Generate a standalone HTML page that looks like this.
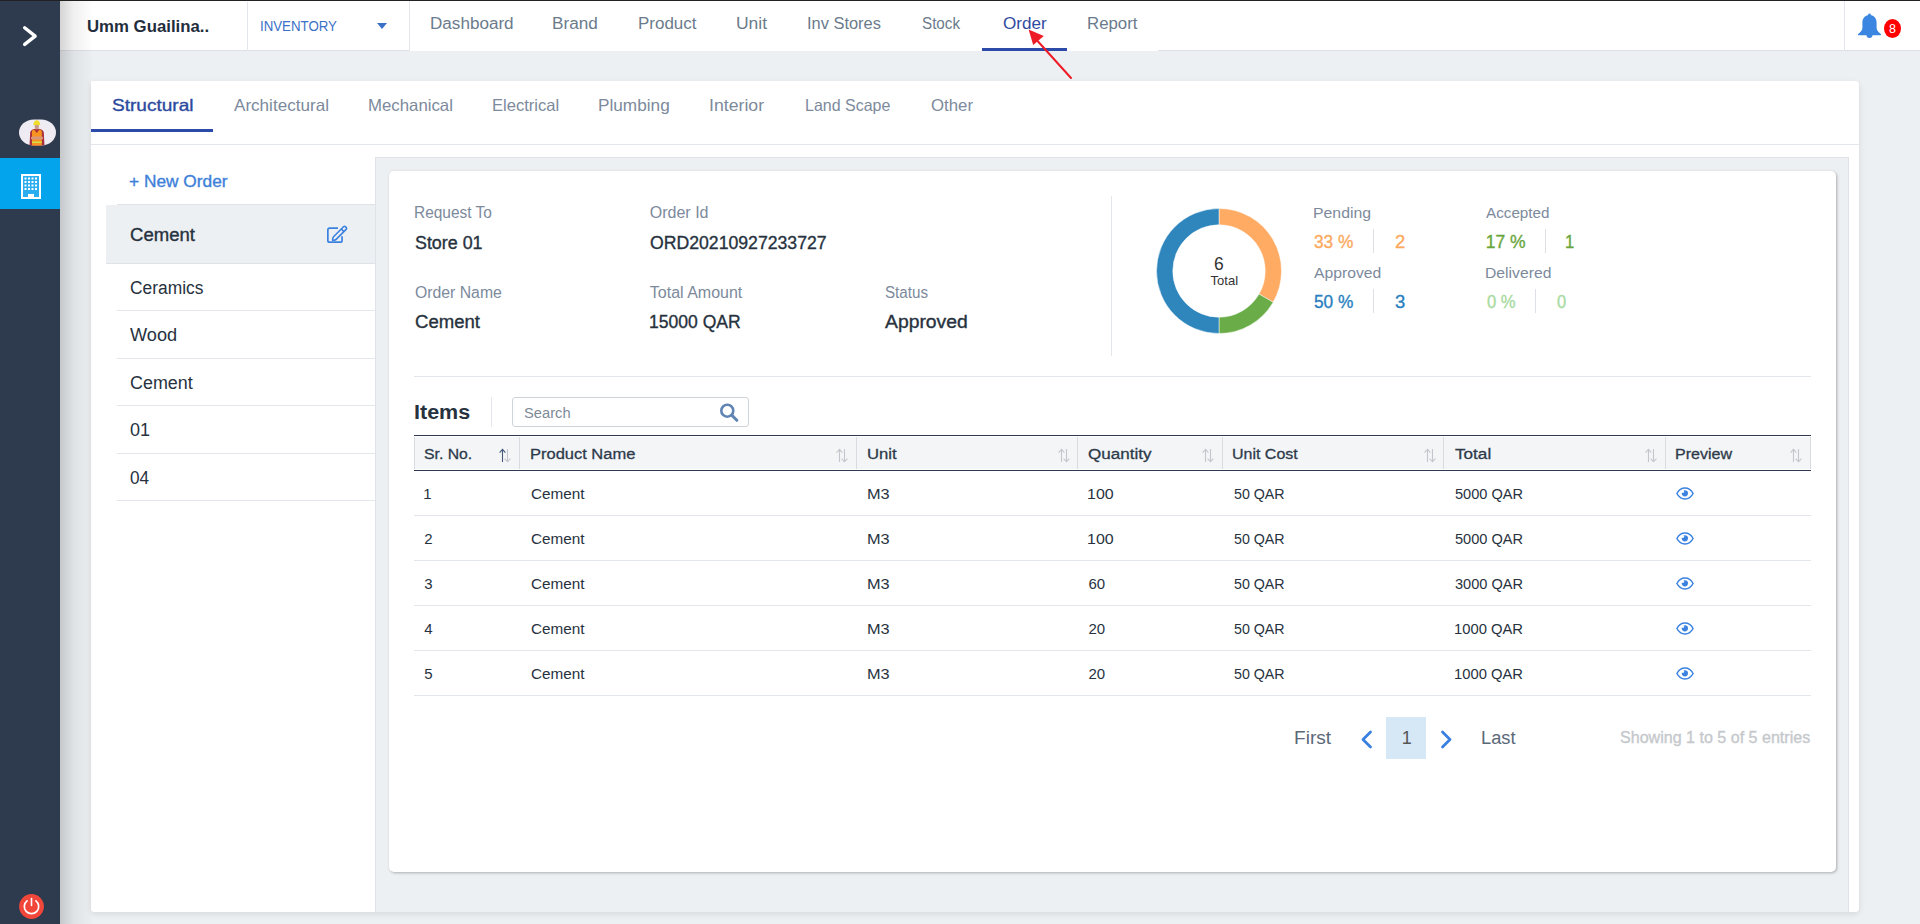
<!DOCTYPE html>
<html><head><meta charset="utf-8">
<style>
*{box-sizing:border-box;margin:0;padding:0}
html,body{width:1920px;height:924px;overflow:hidden;background:#edf0f3;font-family:"Liberation Sans",sans-serif;color:#27323e}
.abs{position:absolute}
.t{position:absolute;white-space:nowrap;line-height:1;transform-origin:0 0}
.bm{display:inline-block;width:0;height:0;vertical-align:baseline}
.hl{position:absolute;height:1px;background:#e3e6ea}
.vl{position:absolute;width:1px;background:#dfe3e7}
</style></head>
<body>
<div class="abs" style="left:0;top:0;width:1920px;height:1px;background:#222"></div>
<div class="abs" style="left:0;top:1px;width:60px;height:923px;background:#2e3b4e">
  <svg class="abs" style="left:22px;top:24px" width="16" height="24" viewBox="0 0 16 24"><path d="M2.65 2.75 L13.15 11.1 L2.65 19.45" fill="none" stroke="#fff" stroke-width="3.4" stroke-linecap="round" stroke-linejoin="round"/></svg>
  <svg class="abs" style="left:19px;top:118px" width="37" height="27" viewBox="0 0 37 27">
    <defs><clipPath id="av"><rect x="0" y="0.5" width="37" height="26" rx="15" ry="13"/></clipPath></defs>
    <rect x="0" y="0.5" width="37" height="26" rx="15" ry="13" fill="#eeecf2"/>
    <g clip-path="url(#av)">
      <path d="M10.5 27 L11.2 13.5 C11.5 11.5 13 10.5 15 10 L18 9.5 L21 10 C23 10.5 24.5 11.5 24.8 13.5 L25.5 27 Z" fill="#a9303c"/>
      <path d="M13 27 V12.5 C13 11.5 14 10.8 15 10.6 L17.8 14 L20.5 10.6 C21.6 10.8 22.8 11.5 22.8 12.5 V27 Z" fill="#f7931e"/>
      <rect x="12" y="17.5" width="12" height="3" rx="1.2" fill="#d9967a"/>
      <rect x="13" y="22.5" width="9.8" height="1.5" fill="#d4e04a"/>
      <ellipse cx="17.8" cy="7.6" rx="2.1" ry="2.8" fill="#c99a84"/>
      <path d="M14.5 5.6 C14.5 2.8 16 1.2 17.8 1.2 C19.6 1.2 21.1 2.8 21.1 5.6 L21.8 6 L13.8 6 Z" fill="#f0dc2a"/>
    </g>
  </svg>
  <div class="abs" style="left:0;top:157px;width:60px;height:51px;background:#03a4ec">
    <svg class="abs" style="left:21px;top:16px" width="20" height="25" viewBox="0 0 20 25">
      <rect x="0" y="0" width="20" height="25" fill="#fff"/>
      <rect x="2" y="2" width="16" height="21" fill="#2aaef0"/>
      <g fill="#fff">
        <rect x="3.5" y="3.5" width="2" height="2"/><rect x="7" y="3.5" width="2" height="2"/><rect x="10.5" y="3.5" width="2" height="2"/><rect x="14" y="3.5" width="2" height="2"/>
        <rect x="3.5" y="7" width="2" height="2"/><rect x="7" y="7" width="2" height="2"/><rect x="10.5" y="7" width="2" height="2"/><rect x="14" y="7" width="2" height="2"/>
        <rect x="3.5" y="10.5" width="2" height="2"/><rect x="7" y="10.5" width="2" height="2"/><rect x="10.5" y="10.5" width="2" height="2"/><rect x="14" y="10.5" width="2" height="2"/>
        <rect x="3.5" y="14" width="2" height="2"/><rect x="7" y="14" width="2" height="2"/><rect x="10.5" y="14" width="2" height="2"/><rect x="14" y="14" width="2" height="2"/>
        <rect x="7" y="20" width="6" height="5"/>
      </g>
    </svg>
  </div>
  <svg class="abs" style="left:19px;top:893px" width="25" height="25" viewBox="0 0 25 25"><circle cx="12.5" cy="12.5" r="12.4" fill="#f0473a"/><path d="M8.07 6.83 A7.2 7.2 0 1 0 16.93 6.83" fill="none" stroke="#fff" stroke-width="1.7" stroke-linecap="round"/><line x1="12.5" y1="4.6" x2="12.5" y2="11.4" stroke="#fff" stroke-width="1.6" stroke-linecap="round"/></svg>
</div>
<!-- header -->
<div class="abs" style="left:60px;top:1px;width:1860px;height:50px;background:#fff;border-bottom:1px solid #dde1e5"></div>
<div class="abs" style="left:410px;top:1px;width:748px;height:50px;background:#fff"></div>
<div class="vl" style="left:247px;top:2px;height:49px;background:#e3e6ea"></div>
<div class="vl" style="left:409px;top:1px;height:50px;background:#e3e6ea"></div>
<div class="vl" style="left:1844px;top:1px;height:50px;background:#e3e6ea"></div>
<svg class="abs" style="left:377px;top:23px" width="10" height="6" viewBox="0 0 10 6"><path d="M0 0 L10 0 L5 6 Z" fill="#3a70c8"/></svg>
<div class="abs" style="left:982px;top:48px;width:85px;height:3px;background:#2c4aa8"></div>
<!-- bell -->
<svg class="abs" style="left:1857px;top:13px" width="25" height="26" viewBox="0 0 25 26">
  <path d="M12.5 0.5 c0.9 0 1.3 0.6 1.3 1.4 c3.6 0.8 5.8 3.8 5.8 7.6 v5.2 c0 2.2 1.6 4.4 4.2 6.4 c0.5 0.4 0.3 1.2 -0.4 1.2 h-21.8 c-0.7 0 -0.9 -0.8 -0.4 -1.2 c2.6 -2 4.2 -4.2 4.2 -6.4 v-5.2 c0 -3.8 2.2 -6.8 5.8 -7.6 c0 -0.8 0.4 -1.4 1.3 -1.4 z" fill="#3a86e0"/>
  <path d="M9.5 22 a3 3 0 0 0 6 0 z" fill="#3a86e0"/>
</svg>
<div class="abs" style="left:1884px;top:19px;width:17px;height:19px;border-radius:50%;background:#f00"></div>
<div class="t" style="left:1889px;top:22.5px;font-size:12.5px;color:#fff">8</div>
<!-- tab card -->
<div class="abs" style="left:91px;top:81px;width:1768px;height:831px;background:#fff;border-radius:0 4px 4px 3px;box-shadow:0 2px 6px rgba(0,0,0,0.10)"></div>
<div class="hl" style="left:91px;top:144px;width:1768px;background:#e3e6ea"></div>
<div class="abs" style="left:91px;top:129px;width:122px;height:3px;background:#2c4aa8"></div>
<!-- left list -->
<div class="abs" style="left:106px;top:205px;width:269px;height:58px;background:#edf0f3"></div>
<div class="hl" style="left:117px;top:204px;width:258px;background:#dfe3e7"></div>
<div class="hl" style="left:106px;top:263px;width:269px;background:#dfe3e7"></div>
<div class="hl" style="left:117px;top:310px;width:258px"></div>
<div class="hl" style="left:117px;top:358px;width:258px"></div>
<div class="hl" style="left:117px;top:405px;width:258px"></div>
<div class="hl" style="left:117px;top:453px;width:258px"></div>
<div class="hl" style="left:117px;top:500px;width:258px"></div>
<svg class="abs" style="left:326px;top:224px" width="24" height="22" viewBox="0 0 24 22">
  <path d="M12 4.15 H3.6 Q1.85 4.15 1.85 5.9 V16.4 Q1.85 18.15 3.6 18.15 H14.3 Q16.05 18.15 16.05 16.4 V12.2" fill="none" stroke="#3b82e0" stroke-width="1.7"/>
  <g transform="translate(-0.8,1.2)"><path d="M18.3 1.6 L8.6 11.3 Q7.6 12.3 7.5 13.6 L7.4 15.1 L8.9 15.0 Q10.2 14.9 11.2 13.9 L20.9 4.2 Q21.9 3.2 20.9 2.2 L20.3 1.6 Q19.3 0.6 18.3 1.6 Z" fill="none" stroke="#3b82e0" stroke-width="1.6" stroke-linejoin="round"/>
  <path d="M16.1 3.8 L18.7 6.4" stroke="#3b82e0" stroke-width="1.6"/></g>
</svg>
<!-- grey panel -->
<div class="abs" style="left:375px;top:157px;width:1474px;height:755px;background:#edf0f3;border:1px solid #dfe3e7;border-bottom:none"></div>
<!-- inner card -->
<div class="abs" style="left:389px;top:171px;width:1447px;height:701px;background:#fff;border-radius:5px;box-shadow:1px 1px 3px rgba(0,0,0,0.28)"></div>
<div class="vl" style="left:1111px;top:196px;height:160px;background:#e3e6ea"></div>
<div class="hl" style="left:414px;top:376px;width:1397px;background:#e3e6ea"></div>
<!-- donut -->
<svg class="abs" style="left:1156px;top:208px" width="126" height="126" viewBox="0 0 126 126">
  <g transform="translate(63,63)">
    <path d="M0 -62.5 A62.5 62.5 0 0 1 54.13 31.25 L40.01 23.1 A46.2 46.2 0 0 0 0 -46.2 Z" fill="#ffab63" stroke="#fff" stroke-width="0.5"/>
    <path d="M54.13 31.25 A62.5 62.5 0 0 1 0 62.5 L0 46.2 A46.2 46.2 0 0 0 40.01 23.1 Z" fill="#6aac47" stroke="#fff" stroke-width="0.5"/>
    <path d="M0 62.5 A62.5 62.5 0 0 1 0 -62.5 L0 -46.2 A46.2 46.2 0 0 0 0 46.2 Z" fill="#2e86bd" stroke="#fff" stroke-width="0.5"/>
  </g>
</svg>
<div class="vl" style="left:1373px;top:229px;height:24px;background:#dde1e6"></div>
<div class="vl" style="left:1545px;top:229px;height:24px;background:#dde1e6"></div>
<div class="vl" style="left:1373px;top:289px;height:24px;background:#dde1e6"></div>
<div class="vl" style="left:1535px;top:289px;height:24px;background:#dde1e6"></div>
<!-- items / search -->
<div class="vl" style="left:491px;top:397px;height:30px;background:#e3e6ea"></div>
<div class="abs" style="left:512px;top:397px;width:237px;height:30px;border:1px solid #cfd4da;border-radius:3px;background:#fff"></div>
<svg class="abs" style="left:719px;top:403px" width="20" height="19" viewBox="0 0 20 19"><circle cx="8.3" cy="7.7" r="6" fill="none" stroke="#6085b5" stroke-width="2.6"/><path d="M12.7 12.1 L17.8 17.3" stroke="#6085b5" stroke-width="3" stroke-linecap="round"/></svg>
<!-- table -->
<div class="abs" style="left:414px;top:435px;width:1397px;height:36px;background:#f4f5f7;border-top:1px solid #2e3a4e;border-bottom:1px solid #2e3a4e;box-shadow:inset 0 1px #fff,inset 0 -1px #fff"></div>
<div class="vl" style="left:519px;top:437px;height:32px;background:#d8dce1"></div>
<div class="vl" style="left:856px;top:437px;height:32px;background:#d8dce1"></div>
<div class="vl" style="left:1077px;top:437px;height:32px;background:#d8dce1"></div>
<div class="vl" style="left:1222px;top:437px;height:32px;background:#d8dce1"></div>
<div class="vl" style="left:1443px;top:437px;height:32px;background:#d8dce1"></div>
<div class="vl" style="left:1665px;top:437px;height:32px;background:#d8dce1"></div>
<div class="vl" style="left:414px;top:437px;height:32px;background:#d8dce1"></div>
<div class="vl" style="left:1810px;top:437px;height:32px;background:#d8dce1"></div>

<svg class="abs" style="left:498.2px;top:448px" width="14" height="15" viewBox="0 0 14 15"><path d="M4.5 14 V1.5 M1.6 4.6 L4.5 1.3 L7.4 4.6" fill="none" stroke="#44597a" stroke-width="1.1"/><path d="M9.5 1 V13.5 M6.6 10.6 L9.5 13.8 L12.4 10.6" fill="none" stroke="#c3c7cd" stroke-width="1.1"/></svg>
<svg class="abs" style="left:834.9px;top:448px" width="14" height="15" viewBox="0 0 14 15"><path d="M4.5 14 V1.5 M1.6 4.6 L4.5 1.3 L7.4 4.6" fill="none" stroke="#c3c7cd" stroke-width="1.1"/><path d="M9.5 1 V13.5 M6.6 10.6 L9.5 13.8 L12.4 10.6" fill="none" stroke="#c3c7cd" stroke-width="1.1"/></svg>
<svg class="abs" style="left:1056.5px;top:448px" width="14" height="15" viewBox="0 0 14 15"><path d="M4.5 14 V1.5 M1.6 4.6 L4.5 1.3 L7.4 4.6" fill="none" stroke="#c3c7cd" stroke-width="1.1"/><path d="M9.5 1 V13.5 M6.6 10.6 L9.5 13.8 L12.4 10.6" fill="none" stroke="#c3c7cd" stroke-width="1.1"/></svg>
<svg class="abs" style="left:1200.9px;top:448px" width="14" height="15" viewBox="0 0 14 15"><path d="M4.5 14 V1.5 M1.6 4.6 L4.5 1.3 L7.4 4.6" fill="none" stroke="#c3c7cd" stroke-width="1.1"/><path d="M9.5 1 V13.5 M6.6 10.6 L9.5 13.8 L12.4 10.6" fill="none" stroke="#c3c7cd" stroke-width="1.1"/></svg>
<svg class="abs" style="left:1422.9px;top:448px" width="14" height="15" viewBox="0 0 14 15"><path d="M4.5 14 V1.5 M1.6 4.6 L4.5 1.3 L7.4 4.6" fill="none" stroke="#c3c7cd" stroke-width="1.1"/><path d="M9.5 1 V13.5 M6.6 10.6 L9.5 13.8 L12.4 10.6" fill="none" stroke="#c3c7cd" stroke-width="1.1"/></svg>
<svg class="abs" style="left:1643.5px;top:448px" width="14" height="15" viewBox="0 0 14 15"><path d="M4.5 14 V1.5 M1.6 4.6 L4.5 1.3 L7.4 4.6" fill="none" stroke="#c3c7cd" stroke-width="1.1"/><path d="M9.5 1 V13.5 M6.6 10.6 L9.5 13.8 L12.4 10.6" fill="none" stroke="#c3c7cd" stroke-width="1.1"/></svg>
<svg class="abs" style="left:1788.5px;top:448px" width="14" height="15" viewBox="0 0 14 15"><path d="M4.5 14 V1.5 M1.6 4.6 L4.5 1.3 L7.4 4.6" fill="none" stroke="#c3c7cd" stroke-width="1.1"/><path d="M9.5 1 V13.5 M6.6 10.6 L9.5 13.8 L12.4 10.6" fill="none" stroke="#c3c7cd" stroke-width="1.1"/></svg>
<div class="hl" style="left:414px;top:515px;width:1397px"></div>
<div class="hl" style="left:414px;top:560px;width:1397px"></div>
<div class="hl" style="left:414px;top:605px;width:1397px"></div>
<div class="hl" style="left:414px;top:650px;width:1397px"></div>
<div class="hl" style="left:414px;top:695px;width:1397px"></div>

<svg class="abs" style="left:1676px;top:487px" width="18" height="13" viewBox="0 0 18 13"><path d="M0.9 6.5 C3 2.6 6 1 9 1 C12 1 15 2.6 17.1 6.5 C15 10.4 12 12 9 12 C6 12 3 10.4 0.9 6.5 Z" fill="none" stroke="#3b82e0" stroke-width="1.5"/><circle cx="8.9" cy="6.3" r="3.1" fill="#3b82e0"/><circle cx="6.9" cy="4.6" r="1.3" fill="#fff"/></svg>
<svg class="abs" style="left:1676px;top:532px" width="18" height="13" viewBox="0 0 18 13"><path d="M0.9 6.5 C3 2.6 6 1 9 1 C12 1 15 2.6 17.1 6.5 C15 10.4 12 12 9 12 C6 12 3 10.4 0.9 6.5 Z" fill="none" stroke="#3b82e0" stroke-width="1.5"/><circle cx="8.9" cy="6.3" r="3.1" fill="#3b82e0"/><circle cx="6.9" cy="4.6" r="1.3" fill="#fff"/></svg>
<svg class="abs" style="left:1676px;top:577px" width="18" height="13" viewBox="0 0 18 13"><path d="M0.9 6.5 C3 2.6 6 1 9 1 C12 1 15 2.6 17.1 6.5 C15 10.4 12 12 9 12 C6 12 3 10.4 0.9 6.5 Z" fill="none" stroke="#3b82e0" stroke-width="1.5"/><circle cx="8.9" cy="6.3" r="3.1" fill="#3b82e0"/><circle cx="6.9" cy="4.6" r="1.3" fill="#fff"/></svg>
<svg class="abs" style="left:1676px;top:622px" width="18" height="13" viewBox="0 0 18 13"><path d="M0.9 6.5 C3 2.6 6 1 9 1 C12 1 15 2.6 17.1 6.5 C15 10.4 12 12 9 12 C6 12 3 10.4 0.9 6.5 Z" fill="none" stroke="#3b82e0" stroke-width="1.5"/><circle cx="8.9" cy="6.3" r="3.1" fill="#3b82e0"/><circle cx="6.9" cy="4.6" r="1.3" fill="#fff"/></svg>
<svg class="abs" style="left:1676px;top:667px" width="18" height="13" viewBox="0 0 18 13"><path d="M0.9 6.5 C3 2.6 6 1 9 1 C12 1 15 2.6 17.1 6.5 C15 10.4 12 12 9 12 C6 12 3 10.4 0.9 6.5 Z" fill="none" stroke="#3b82e0" stroke-width="1.5"/><circle cx="8.9" cy="6.3" r="3.1" fill="#3b82e0"/><circle cx="6.9" cy="4.6" r="1.3" fill="#fff"/></svg>
<!-- pagination -->
<svg class="abs" style="left:1360px;top:730px" width="13" height="19" viewBox="0 0 13 19"><path d="M10.5 2 L3 9.5 L10.5 17" fill="none" stroke="#3a80e0" stroke-width="2.8" stroke-linecap="round" stroke-linejoin="round"/></svg>
<div class="abs" style="left:1386px;top:717px;width:40px;height:42px;background:#d6e8f6"></div>
<svg class="abs" style="left:1440px;top:730px" width="13" height="19" viewBox="0 0 13 19"><path d="M2.5 2 L10 9.5 L2.5 17" fill="none" stroke="#3a80e0" stroke-width="2.8" stroke-linecap="round" stroke-linejoin="round"/></svg>
<!-- arrow annotation -->
<svg class="abs" style="left:1020px;top:25px" width="60" height="60" viewBox="0 0 60 60">
  <line x1="14" y1="12" x2="51" y2="53" stroke="#ee1c25" stroke-width="2" stroke-linecap="round"/>
  <path d="M8.6 4.5 L23.8 10.9 L13.2 20 Z" fill="#ee1c25"/>
</svg>
<!-- sidebar shadow -->
<div class="abs" style="left:60px;top:1px;width:34px;height:923px;background:linear-gradient(to right,rgba(0,0,0,0.17),rgba(0,0,0,0.06) 40%,rgba(0,0,0,0))"></div>
<div class="t" style="font-size:16.5px;color:#1f2d3d;font-weight:bold;left:87.00px;top:18.00px;transform:scaleX(1.0165);">Umm Guailina..</div>
<div class="t" style="font-size:14px;color:#3a70c8;left:259.85px;top:18.90px;transform:scaleX(0.9476);">INVENTORY</div>
<div class="t" style="font-size:16px;color:#6b7b8c;left:429.63px;top:15.80px;transform:scaleX(1.0684);">Dashboard</div>
<div class="t" style="font-size:16px;color:#6b7b8c;left:552.43px;top:15.80px;transform:scaleX(1.0736);">Brand</div>
<div class="t" style="font-size:16px;color:#6b7b8c;left:637.94px;top:15.80px;transform:scaleX(1.0604);">Product</div>
<div class="t" style="font-size:16px;color:#6b7b8c;left:736.31px;top:15.80px;transform:scaleX(1.0926);">Unit</div>
<div class="t" style="font-size:16px;color:#6b7b8c;left:807.37px;top:15.80px;transform:scaleX(1.0263);">Inv Stores</div>
<div class="t" style="font-size:16px;color:#6b7b8c;left:922.30px;top:15.80px;transform:scaleX(0.9509);">Stock</div>
<div class="t" style="font-size:16px;color:#2f4aa0;left:1002.60px;top:15.80px;transform:scaleX(1.0681);">Order</div>
<div class="t" style="font-size:16px;color:#6b7b8c;left:1086.95px;top:15.80px;transform:scaleX(1.0509);">Report</div>
<div class="t" style="font-size:16.5px;color:#2c4a9e;-webkit-text-stroke:0.35px #2c4a9e;left:111.75px;top:96.50px;transform:scaleX(1.1545);">Structural</div>
<div class="t" style="font-size:16.5px;color:#7c8a9c;left:233.75px;top:96.50px;transform:scaleX(1.0353);">Architectural</div>
<div class="t" style="font-size:16.5px;color:#7c8a9c;left:368.23px;top:96.50px;transform:scaleX(1.0178);">Mechanical</div>
<div class="t" style="font-size:16.5px;color:#7c8a9c;left:492.25px;top:96.50px;transform:scaleX(1.0035);">Electrical</div>
<div class="t" style="font-size:16.5px;color:#7c8a9c;left:598.46px;top:96.50px;transform:scaleX(1.0427);">Plumbing</div>
<div class="t" style="font-size:16.5px;color:#7c8a9c;left:709.43px;top:96.50px;transform:scaleX(1.0716);">Interior</div>
<div class="t" style="font-size:16.5px;color:#7c8a9c;left:805.28px;top:96.50px;transform:scaleX(0.9695);">Land Scape</div>
<div class="t" style="font-size:16.5px;color:#7c8a9c;left:931.25px;top:96.50px;transform:scaleX(1.0174);">Other</div>
<div class="t" style="font-size:17px;color:#3d7fd9;-webkit-text-stroke:0.35px #3d7fd9;left:129.10px;top:173.00px;transform:scaleX(1.0177);">+ New Order</div>
<div class="t" style="font-size:18px;color:#27323e;-webkit-text-stroke:0.35px #27323e;left:129.90px;top:226.00px;transform:scaleX(1.0297);">Cement</div>
<div class="t" style="font-size:18px;color:#27323e;left:129.90px;top:279.20px;transform:scaleX(0.9657);">Ceramics</div>
<div class="t" style="font-size:18px;color:#27323e;left:129.90px;top:326.40px;transform:scaleX(1.0091);">Wood</div>
<div class="t" style="font-size:18px;color:#27323e;left:129.90px;top:374.00px;transform:scaleX(0.9948);">Cement</div>
<div class="t" style="font-size:18px;color:#27323e;left:129.90px;top:421.00px;">01</div>
<div class="t" style="font-size:18px;color:#27323e;left:129.90px;top:469.20px;transform:scaleX(0.9545);">04</div>
<div class="t" style="font-size:16px;color:#7c8a9c;left:413.53px;top:205.40px;transform:scaleX(0.9658);">Request To</div>
<div class="t" style="font-size:18px;color:#27323e;-webkit-text-stroke:0.35px #27323e;left:414.50px;top:233.50px;transform:scaleX(0.9921);">Store 01</div>
<div class="t" style="font-size:16px;color:#7c8a9c;left:649.80px;top:205.40px;">Order Id</div>
<div class="t" style="font-size:18px;color:#27323e;-webkit-text-stroke:0.35px #27323e;left:649.80px;top:233.50px;transform:scaleX(0.9804);">ORD20210927233727</div>
<div class="t" style="font-size:16px;color:#7c8a9c;left:414.50px;top:285.30px;transform:scaleX(0.9861);">Order Name</div>
<div class="t" style="font-size:18px;color:#27323e;-webkit-text-stroke:0.35px #27323e;left:414.50px;top:313.00px;transform:scaleX(1.0313);">Cement</div>
<div class="t" style="font-size:16px;color:#7c8a9c;left:649.80px;top:285.30px;">Total Amount</div>
<div class="t" style="font-size:18px;color:#27323e;-webkit-text-stroke:0.35px #27323e;left:648.83px;top:313.00px;transform:scaleX(0.9746);">15000 QAR</div>
<div class="t" style="font-size:16px;color:#7c8a9c;left:885.00px;top:285.30px;transform:scaleX(0.9480);">Status</div>
<div class="t" style="font-size:18px;color:#27323e;-webkit-text-stroke:0.35px #27323e;left:885.00px;top:313.00px;transform:scaleX(1.0744);">Approved</div>
<div class="t" style="font-size:18px;color:#333;left:1213.90px;top:254.70px;transform:scaleX(0.9700);">6</div>
<div class="t" style="font-size:13px;color:#333;left:1210.60px;top:274.40px;">Total</div>
<div class="t" style="font-size:15px;color:#7c8a9c;left:1312.95px;top:205.10px;transform:scaleX(1.0539);">Pending</div>
<div class="t" style="font-size:17.5px;color:#fba95e;-webkit-text-stroke:0.35px #fba95e;left:1314.00px;top:233.80px;transform:scaleX(0.9866);">33 %</div>
<div class="t" style="font-size:17.5px;color:#fba95e;-webkit-text-stroke:0.35px #fba95e;left:1394.50px;top:233.80px;transform:scaleX(1.0556);">2</div>
<div class="t" style="font-size:15px;color:#7c8a9c;left:1485.60px;top:205.10px;transform:scaleX(1.0153);">Accepted</div>
<div class="t" style="font-size:17.5px;color:#6aa63e;-webkit-text-stroke:0.35px #6aa63e;left:1485.70px;top:233.80px;">17 %</div>
<div class="t" style="font-size:17.5px;color:#6aa63e;-webkit-text-stroke:0.35px #6aa63e;left:1565.45px;top:233.80px;transform:scaleX(0.9500);">1</div>
<div class="t" style="font-size:15px;color:#7c8a9c;left:1314.00px;top:264.80px;transform:scaleX(1.0490);">Approved</div>
<div class="t" style="font-size:17.5px;color:#2a7fc0;-webkit-text-stroke:0.35px #2a7fc0;left:1314.00px;top:293.50px;transform:scaleX(0.9866);">50 %</div>
<div class="t" style="font-size:17.5px;color:#2a7fc0;-webkit-text-stroke:0.35px #2a7fc0;left:1394.50px;top:293.50px;transform:scaleX(1.0556);">3</div>
<div class="t" style="font-size:15px;color:#7c8a9c;left:1484.95px;top:264.80px;transform:scaleX(1.0481);">Delivered</div>
<div class="t" style="font-size:17.5px;color:#a8dba0;-webkit-text-stroke:0.35px #a8dba0;left:1486.70px;top:293.50px;transform:scaleX(0.9495);">0 %</div>
<div class="t" style="font-size:17.5px;color:#a8dba0;-webkit-text-stroke:0.35px #a8dba0;left:1557.00px;top:293.50px;transform:scaleX(0.9400);">0</div>
<div class="t" style="font-size:20px;color:#27323e;font-weight:bold;left:414.22px;top:402.10px;transform:scaleX(1.0758);">Items</div>
<div class="t" style="font-size:15.5px;color:#7e8a98;left:524.00px;top:405.20px;transform:scaleX(0.9486);">Search</div>
<div class="t" style="font-size:15.5px;color:#2d3a4a;-webkit-text-stroke:0.3px #2d3a4a;left:424.30px;top:446.40px;transform:scaleX(1.0180);">Sr. No.</div>
<div class="t" style="font-size:15.5px;color:#2d3a4a;-webkit-text-stroke:0.3px #2d3a4a;left:529.64px;top:446.40px;transform:scaleX(1.0631);">Product Name</div>
<div class="t" style="font-size:15.5px;color:#2d3a4a;-webkit-text-stroke:0.3px #2d3a4a;left:866.63px;top:446.40px;transform:scaleX(1.0749);">Unit</div>
<div class="t" style="font-size:15.5px;color:#2d3a4a;-webkit-text-stroke:0.3px #2d3a4a;left:1088.40px;top:446.40px;transform:scaleX(1.1005);">Quantity</div>
<div class="t" style="font-size:15.5px;color:#2d3a4a;-webkit-text-stroke:0.3px #2d3a4a;left:1232.47px;top:446.40px;transform:scaleX(1.0310);">Unit Cost</div>
<div class="t" style="font-size:15.5px;color:#2d3a4a;-webkit-text-stroke:0.3px #2d3a4a;left:1454.90px;top:446.40px;transform:scaleX(1.1054);">Total</div>
<div class="t" style="font-size:15.5px;color:#2d3a4a;-webkit-text-stroke:0.3px #2d3a4a;left:1675.26px;top:446.40px;transform:scaleX(1.0358);">Preview</div>
<div class="t" style="font-size:15px;color:#27323e;left:423.20px;top:486.00px;">1</div>
<div class="t" style="font-size:15px;color:#27323e;left:530.50px;top:486.00px;transform:scaleX(1.0196);">Cement</div>
<div class="t" style="font-size:15px;color:#27323e;left:866.61px;top:486.00px;transform:scaleX(1.0875);">M3</div>
<div class="t" style="font-size:15px;color:#27323e;left:1087.34px;top:486.00px;transform:scaleX(1.0640);">100</div>
<div class="t" style="font-size:15px;color:#27323e;left:1233.50px;top:486.00px;transform:scaleX(0.9491);">50 QAR</div>
<div class="t" style="font-size:15px;color:#27323e;left:1454.90px;top:486.00px;transform:scaleX(0.9714);">5000 QAR</div>
<div class="t" style="font-size:15px;color:#27323e;left:424.20px;top:531.00px;">2</div>
<div class="t" style="font-size:15px;color:#27323e;left:530.50px;top:531.00px;transform:scaleX(1.0196);">Cement</div>
<div class="t" style="font-size:15px;color:#27323e;left:866.61px;top:531.00px;transform:scaleX(1.0875);">M3</div>
<div class="t" style="font-size:15px;color:#27323e;left:1087.34px;top:531.00px;transform:scaleX(1.0640);">100</div>
<div class="t" style="font-size:15px;color:#27323e;left:1233.50px;top:531.00px;transform:scaleX(0.9491);">50 QAR</div>
<div class="t" style="font-size:15px;color:#27323e;left:1454.90px;top:531.00px;transform:scaleX(0.9714);">5000 QAR</div>
<div class="t" style="font-size:15px;color:#27323e;left:424.20px;top:576.00px;">3</div>
<div class="t" style="font-size:15px;color:#27323e;left:530.50px;top:576.00px;transform:scaleX(1.0196);">Cement</div>
<div class="t" style="font-size:15px;color:#27323e;left:866.61px;top:576.00px;transform:scaleX(1.0875);">M3</div>
<div class="t" style="font-size:15px;color:#27323e;left:1088.40px;top:576.00px;">60</div>
<div class="t" style="font-size:15px;color:#27323e;left:1233.50px;top:576.00px;transform:scaleX(0.9491);">50 QAR</div>
<div class="t" style="font-size:15px;color:#27323e;left:1454.90px;top:576.00px;transform:scaleX(0.9714);">3000 QAR</div>
<div class="t" style="font-size:15px;color:#27323e;left:424.20px;top:621.00px;">4</div>
<div class="t" style="font-size:15px;color:#27323e;left:530.50px;top:621.00px;transform:scaleX(1.0196);">Cement</div>
<div class="t" style="font-size:15px;color:#27323e;left:866.61px;top:621.00px;transform:scaleX(1.0875);">M3</div>
<div class="t" style="font-size:15px;color:#27323e;left:1088.40px;top:621.00px;">20</div>
<div class="t" style="font-size:15px;color:#27323e;left:1233.50px;top:621.00px;transform:scaleX(0.9491);">50 QAR</div>
<div class="t" style="font-size:15px;color:#27323e;left:1453.91px;top:621.00px;transform:scaleX(0.9854);">1000 QAR</div>
<div class="t" style="font-size:15px;color:#27323e;left:424.20px;top:666.00px;">5</div>
<div class="t" style="font-size:15px;color:#27323e;left:530.50px;top:666.00px;transform:scaleX(1.0196);">Cement</div>
<div class="t" style="font-size:15px;color:#27323e;left:866.61px;top:666.00px;transform:scaleX(1.0875);">M3</div>
<div class="t" style="font-size:15px;color:#27323e;left:1088.40px;top:666.00px;">20</div>
<div class="t" style="font-size:15px;color:#27323e;left:1233.50px;top:666.00px;transform:scaleX(0.9491);">50 QAR</div>
<div class="t" style="font-size:15px;color:#27323e;left:1453.91px;top:666.00px;transform:scaleX(0.9854);">1000 QAR</div>
<div class="t" style="font-size:18px;color:#5a6878;left:1293.94px;top:728.80px;transform:scaleX(1.0592);">First</div>
<div class="t" style="font-size:18px;color:#555;left:1401.80px;top:728.80px;">1</div>
<div class="t" style="font-size:18px;color:#5a6878;left:1481.49px;top:728.80px;transform:scaleX(1.0145);">Last</div>
<div class="t" style="font-size:16px;color:#c5c8cc;-webkit-text-stroke:0.35px #c5c8cc;left:1620.00px;top:730.20px;transform:scaleX(1.0039);">Showing 1 to 5 of 5 entries</div>
</body></html>
